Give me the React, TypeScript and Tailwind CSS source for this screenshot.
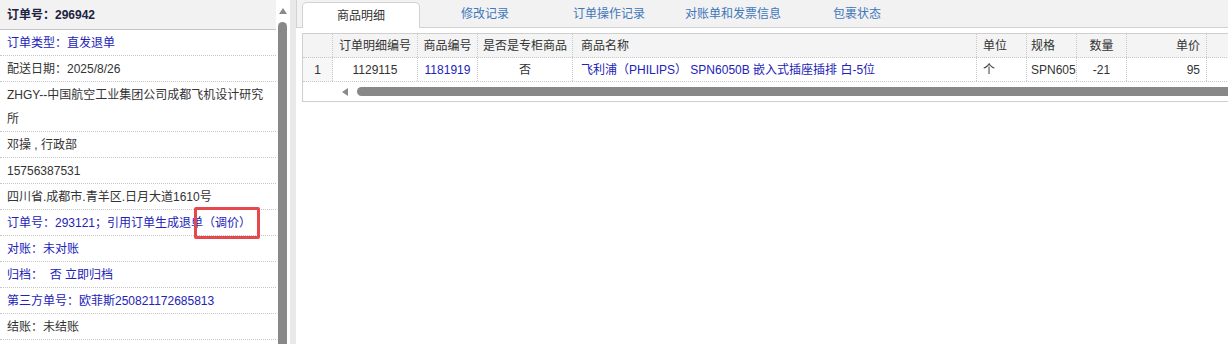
import React from "react";

const rows: { text: React.ReactNode; blue?: boolean; tall?: boolean }[] = [
  { text: "订单类型：直发退单", blue: true },
  { text: "配送日期：2025/8/26" },
  { text: "ZHGY--中国航空工业集团公司成都飞机设计研究所", tall: true },
  { text: "邓操 , 行政部" },
  { text: "15756387531" },
  { text: "四川省.成都市.青羊区.日月大道1610号" },
  { text: "订单号：293121；引用订单生成退单（调价）", blue: true },
  { text: "对账：未对账", blue: true },
  { text: "归档：\u00a0\u00a0否 立即归档", blue: true },
  { text: "第三方单号：欧菲斯250821172685813", blue: true },
  { text: "结账：未结账" },
];

const tabs = ["商品明细", "修改记录", "订单操作记录", "对账单和发票信息", "包裹状态"];

type Col = { label: string; w: string; align: string; pad: string };
const cols: Col[] = [
  { label: "", w: "w-[30px]", align: "justify-center", pad: "" },
  { label: "订单明细编号", w: "w-[85px]", align: "justify-center", pad: "" },
  { label: "商品编号", w: "w-[60px]", align: "justify-center", pad: "" },
  { label: "是否是专柜商品", w: "w-[95px]", align: "justify-center", pad: "" },
  { label: "商品名称", w: "w-[404px]", align: "justify-start", pad: "pl-[8px]" },
  { label: "单位", w: "w-[50px]", align: "justify-start", pad: "pl-[6px]" },
  { label: "规格", w: "w-[50px]", align: "justify-start", pad: "pl-[4px]" },
  { label: "数量", w: "w-[50px]", align: "justify-center", pad: "" },
  { label: "单价", w: "w-[80px]", align: "justify-end", pad: "pr-[6px]" },
  { label: "", w: "w-[80px]", align: "justify-start", pad: "" },
];

const data: { v: string; blue?: boolean }[] = [
  { v: "1" },
  { v: "1129115" },
  { v: "1181919", blue: true },
  { v: "否" },
  { v: "飞利浦（PHILIPS） SPN6050B 嵌入式插座插排 白-5位", blue: true },
  { v: "个" },
  { v: "SPN605" },
  { v: "-21" },
  { v: "95" },
  { v: "" },
];

export default function App() {
  return (
    <div
      className="flex w-[1228px] h-[344px] overflow-hidden bg-white text-[12px] text-[#333]"
      style={{ fontFamily: '"Liberation Sans", Arial, "Noto Sans CJK SC", sans-serif' }}
    >
      {/* Left panel */}
      <div className="relative w-[276px] shrink-0">
        <div className="h-[30px] bg-[#f2f2f2] border-b border-[#c4c4c4] px-[7px] flex items-center font-bold text-[#1c2340]">
          订单号：296942
        </div>
        {rows.map((r, i) => (
          <div
            key={i}
            className={`px-[7px] pt-[1px] leading-[24px] border-b border-dotted border-[#c6c6c6] ${
              r.blue ? "text-[#2222b8]" : "text-[#333]"
            }`}
          >
            {r.text}
          </div>
        ))}
        <div className="absolute left-[194px] top-[207px] w-[66px] h-[32px] border-[3px] border-[#e5484d] rounded-[2px]" />
      </div>

      {/* Left scrollbar */}
      <div className="w-[2px] shrink-0" />
      <div className="w-[9px] shrink-0 flex flex-col items-center">
        <div className="mt-[8px] w-0 h-0 border-l-[4px] border-r-[4px] border-b-[6px] border-l-transparent border-r-transparent border-b-[#8a8a8a]" />
        <div className="mt-[8px] w-[9px] flex-1 bg-[#888] rounded-t-full" />
      </div>
      <div className="w-[3px] shrink-0" />
      <div className="w-[6px] shrink-0 bg-[#e9e9e9]" />

      {/* Right panel */}
      <div className="flex-1 min-w-0 overflow-hidden flex flex-col">
        <div className="h-[28px] shrink-0 bg-[#f2f2f2] border-b border-l border-[#d2d2d2] pl-[5px] flex items-end gap-[6px]">
          {tabs.map((t, i) =>
            i === 0 ? (
              <div
                key={t}
                className="w-[118px] h-[26px] -mb-px bg-white border border-b-0 border-[#d2d2d2] rounded-t-[5px] flex items-center justify-center text-[#333]"
              >
                {t}
              </div>
            ) : (
              <div key={t} className="w-[118px] h-[26px] flex items-center justify-center text-[#3f77bb]">
                {t}
              </div>
            )
          )}
        </div>

        <div className="pl-[6px] pt-[5px]">
          <div className="w-[1000px] border border-[#cfcfcf]">
            {/* header */}
            <div className="flex h-[24px] bg-[#f4f4f4] border-b border-dotted border-[#c8c8c8]">
              {cols.map((c, i) => (
                <div
                  key={i}
                  className={`${c.w} shrink-0 h-full flex items-center ${c.align} ${c.pad} border-r border-dotted border-[#c8c8c8] whitespace-nowrap overflow-hidden`}
                >
                  {c.label}
                </div>
              ))}
            </div>
            {/* data row */}
            <div className="flex h-[24px] border-b border-dotted border-[#c8c8c8]">
              {cols.map((c, i) => (
                <div
                  key={i}
                  className={`${c.w} shrink-0 h-full flex items-center ${c.align} ${c.pad} border-r border-dotted border-[#c8c8c8] whitespace-nowrap overflow-hidden ${
                    data[i].blue ? "text-[#2222b8]" : "text-[#333]"
                  } ${i === 0 ? "bg-[#f7f7f7]" : ""}`}
                >
                  {data[i].v}
                </div>
              ))}
            </div>
            {/* horizontal scrollbar */}
            <div className="h-[19px] flex items-center pl-[39px]">
              <div className="w-0 h-0 border-t-[4px] border-b-[4px] border-r-[6px] border-t-transparent border-b-transparent border-r-[#8a8a8a]" />
              <div className="ml-[9px] flex-1 h-[9px] bg-[#888] rounded-l-full" />
            </div>
          </div>
        </div>
      </div>
    </div>
  );
}
